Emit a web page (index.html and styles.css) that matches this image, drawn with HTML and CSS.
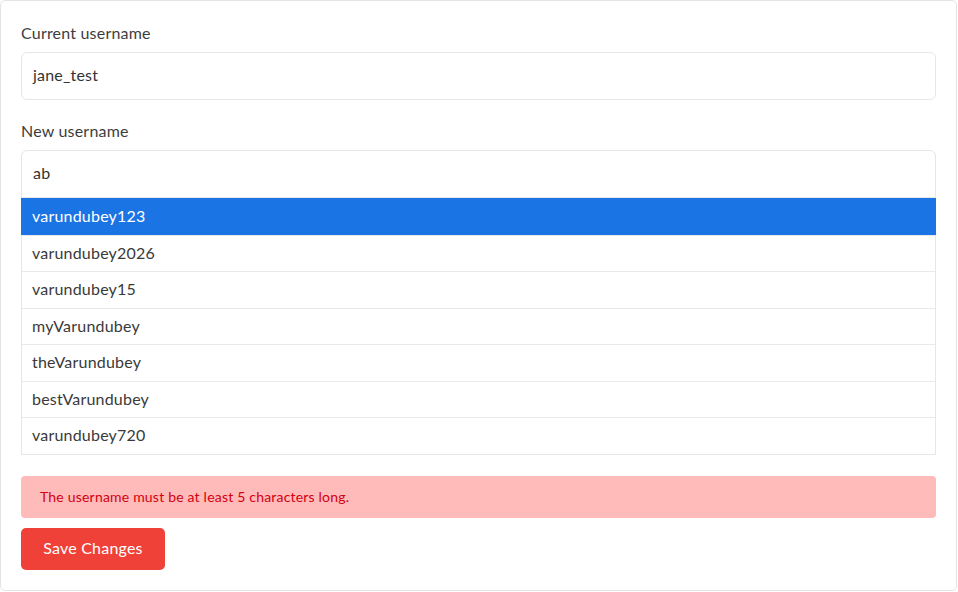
FILE: index.html
```html
<!DOCTYPE html>
<html lang="en">
<head>
<meta charset="utf-8">
<title>Change username</title>
<link rel="stylesheet" href="styles.css">
</head>
<body>
<div class="card">
  <div class="field">
    <label class="label">Current username</label>
    <div class="input">jane_test</div>
  </div>
  <div class="field">
    <label class="label">New username</label>
    <div class="input input-open">ab</div>
    <ul class="suggestions">
      <li class="item active">varundubey123</li>
      <li class="item">varundubey2026</li>
      <li class="item">varundubey15</li>
      <li class="item">myVarundubey</li>
      <li class="item">theVarundubey</li>
      <li class="item">bestVarundubey</li>
      <li class="item">varundubey720</li>
    </ul>
  </div>
  <div class="alert">The username must be at least 5 characters long.</div>
  <button class="btn">Save Changes</button>
</div>
</body>
</html>
```
FILE: styles.css
```css
* { box-sizing: border-box; }
html, body { margin: 0; padding: 0; background: #fff; }
body {
  font-family: Lato, "Noto Sans", "Liberation Sans", sans-serif;
  color: #3a3a3a;
  letter-spacing: 0.2px;
}
.card {
  width: 957px;
  height: 591px;
  border: 1px solid #e4e4e4;
  border-radius: 5px;
  padding: 21px 20px 20px 20px;
  display: flex;
  flex-direction: column;
}
.field { display: flex; flex-direction: column; margin-bottom: 20px; }
.label {
  font-size: 16px;
  line-height: 22px;
  margin-bottom: 8px;
  color: #3d3d3d;
}
.input {
  height: 48px;
  border: 1px solid #e6e6e6;
  border-radius: 6px;
  padding: 0 11px 3px;
  display: flex;
  align-items: center;
  font-size: 16px;
  color: #333;
}
.input-open { border-radius: 6px 6px 0 0; }
.suggestions {
  list-style: none;
  margin: 0;
  padding: 0;
  border: 1px solid #e6e6e6;
  border-top: none;
}
.item {
  height: 36.5px;
  display: flex;
  align-items: center;
  padding: 0 10px 2px;
  font-size: 16px;
  color: #3a3a3a;
  border-top: 1px solid #e9e9e9;
}
.item:first-child { border-top: none; }
.item.active {
  background: #1b74e4;
  color: #fff;
  margin: 0 -1px;
  padding-left: 11px;
}
.alert {
  height: 43px;
  background: #ffbaba;
  color: #d3000f;
  border-radius: 4px;
  font-size: 14px;
  display: flex;
  align-items: center;
  padding: 0 19px 1px;
  margin-top: 1px;
}
.btn {
  align-self: flex-start;
  margin-top: 10px;
  width: 144px;
  height: 42px;
  border: none;
  border-radius: 5px;
  background: #ef4137;
  color: #fff;
  font-family: inherit;
  font-size: 16px;
  letter-spacing: 0.2px;
  padding: 0 0 3px;
}
```
